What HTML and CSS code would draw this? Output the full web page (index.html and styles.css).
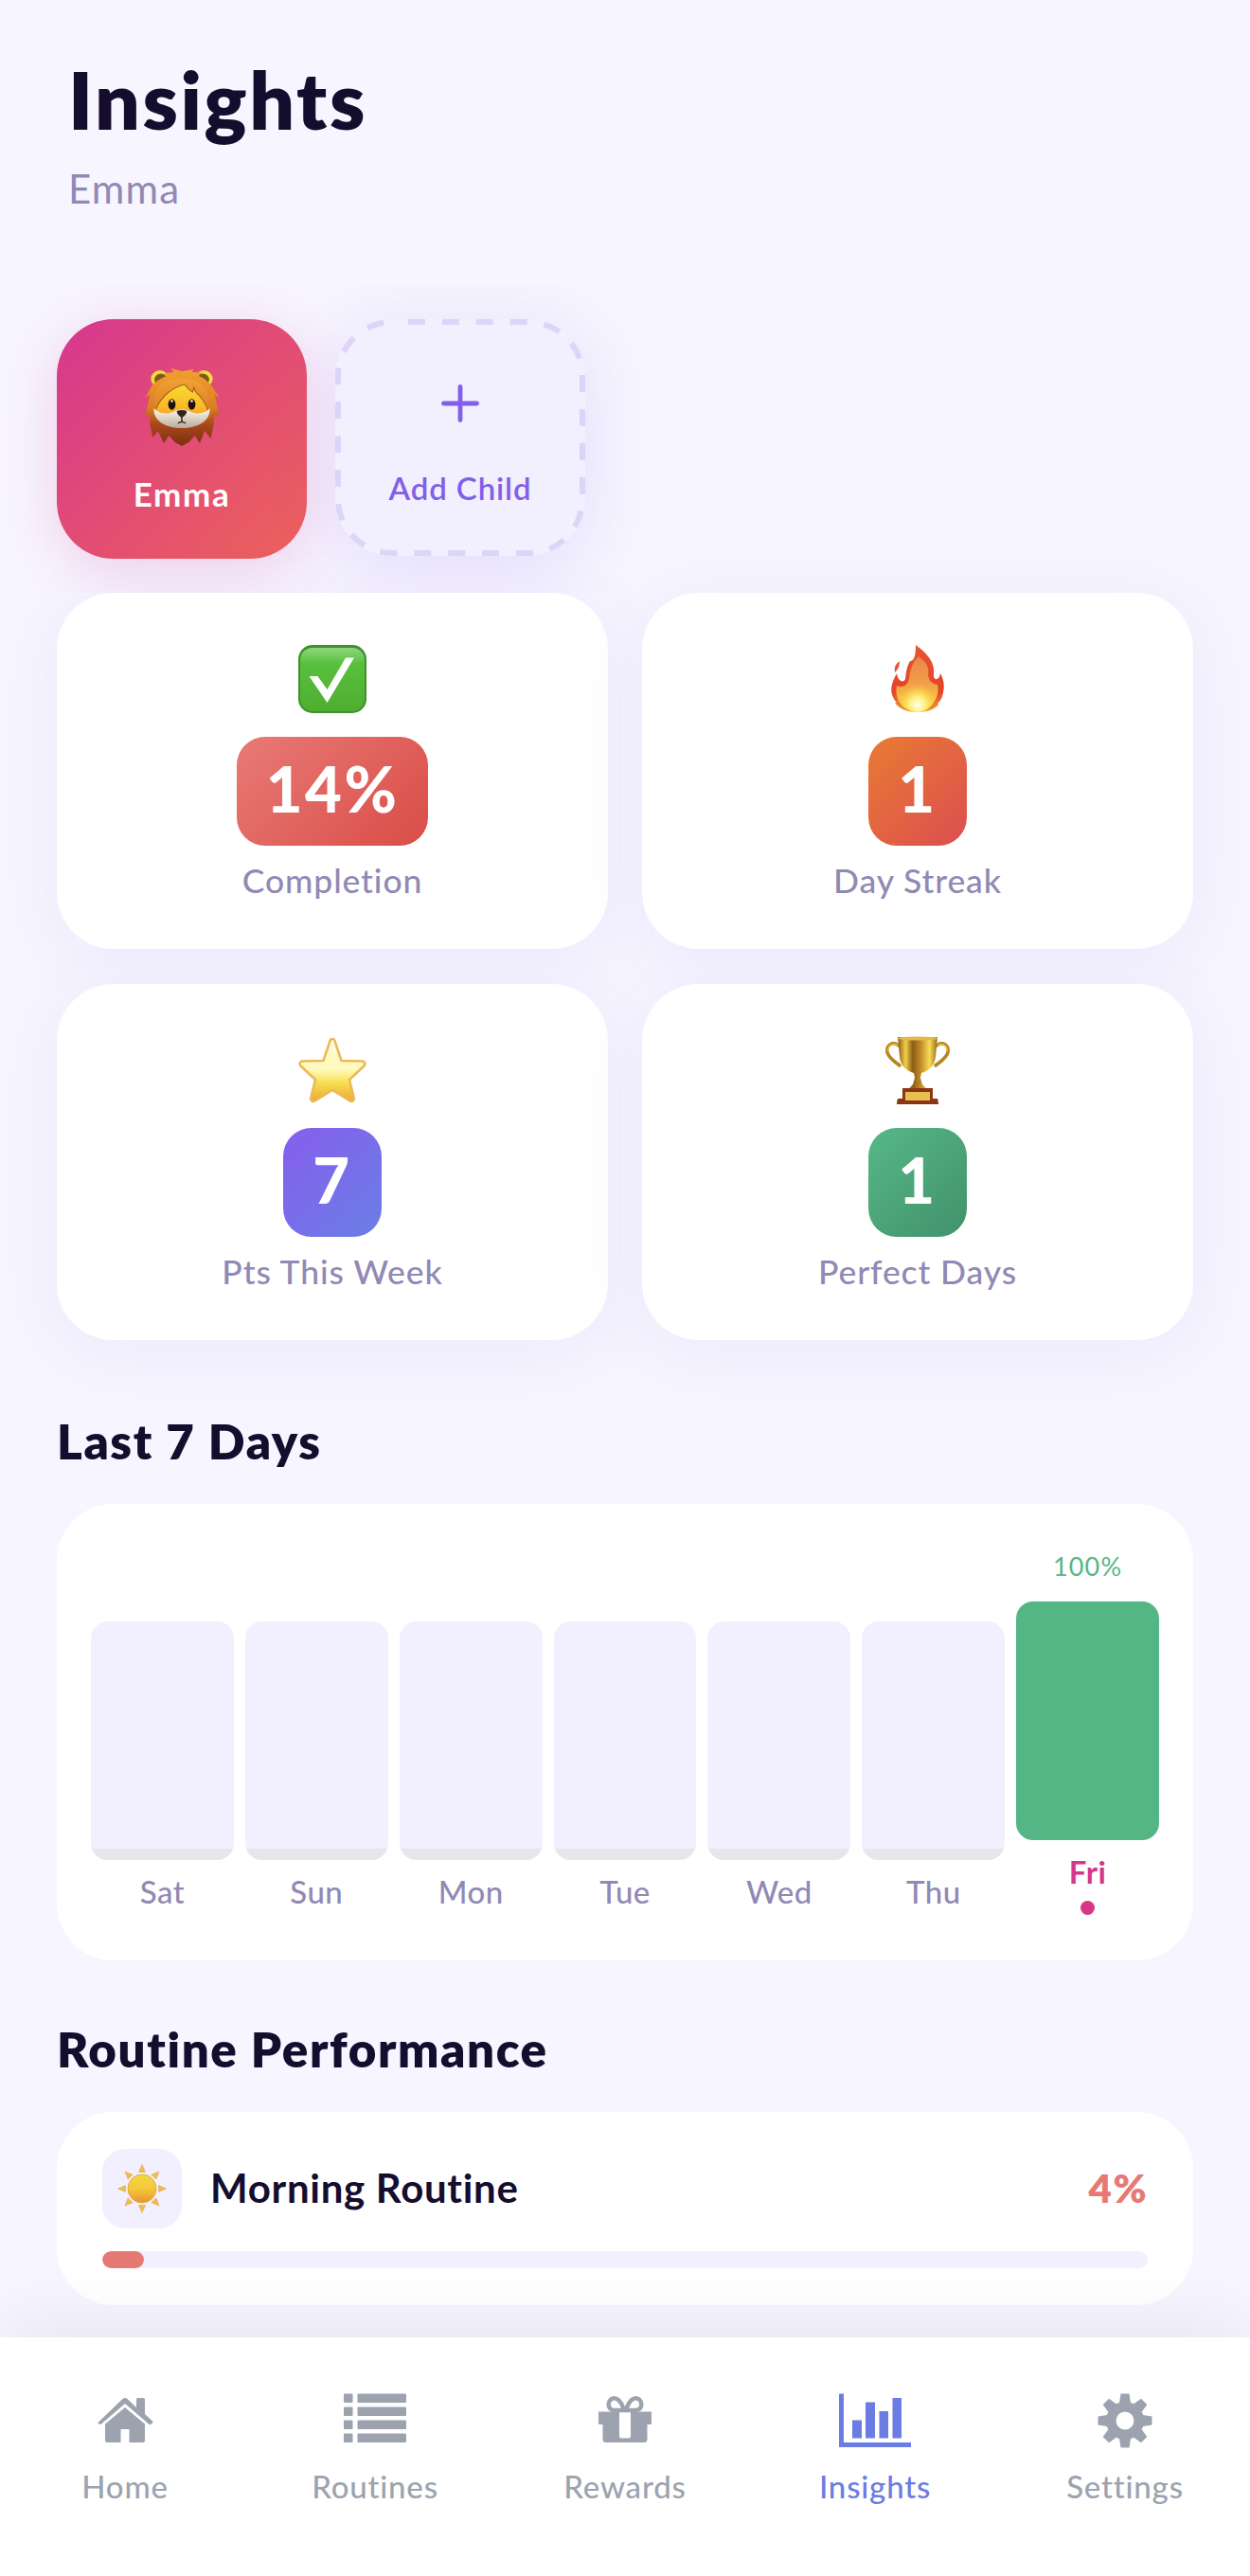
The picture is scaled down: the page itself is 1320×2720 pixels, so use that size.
FILE: index.html
```html
<!DOCTYPE html>
<html lang="en">
<head>
  <meta charset="UTF-8" />
  <meta name="viewport" content="width=device-width, initial-scale=1.0"/>
  <title>Insights</title>
  <link rel="stylesheet" href="styles.css">
</head>
<body>

<header>
  <h1>Insights</h1>
  <p>Emma</p>
</header>

<section class="children">
  <div class="child active">
    <svg width="80" height="82" viewBox="0 0 76 82" preserveAspectRatio="none">
      <defs>
        <linearGradient id="mane" x1="0" y1="0" x2="0" y2="1">
          <stop offset="0" stop-color="#f0a030"/>
          <stop offset="0.5" stop-color="#dc7f24"/>
          <stop offset="0.72" stop-color="#a8481a"/>
          <stop offset="1" stop-color="#7c2f12"/>
        </linearGradient>
        <linearGradient id="hair" x1="0" y1="0" x2="0" y2="1">
          <stop offset="0" stop-color="#f0a234"/>
          <stop offset="1" stop-color="#dd8124"/>
        </linearGradient>
        <linearGradient id="face" x1="0" y1="0" x2="0" y2="1">
          <stop offset="0" stop-color="#f6dc30"/>
          <stop offset="0.5" stop-color="#fbbc28"/>
          <stop offset="1" stop-color="#f08a2c"/>
        </linearGradient>
        <linearGradient id="muzzle" x1="0" y1="0" x2="0" y2="1">
          <stop offset="0" stop-color="#fffaf0"/>
          <stop offset="1" stop-color="#b9ab9c"/>
        </linearGradient>
      </defs>
      <circle cx="16" cy="11" r="9" fill="#f2dc3c"/>
      <circle cx="60" cy="11" r="9" fill="#f2dc3c"/>
      <circle cx="17" cy="12" r="6.5" fill="#7d5a1c"/>
      <circle cx="59" cy="12" r="6.5" fill="#7d5a1c"/>
      <path fill="url(#mane)" d="M38 3 L27 0 L30 4 L20 5 L23 8 C13 12 8 17 6 22 L1 31 L6 28 L1 52 L6 49 L6 59 L9 73 L14 66 L20 79 L25 71 L31 78 L38 82 L45 78 L51 71 L56 79 L61 66 L67 74 L70 59 L71 49 L76 52 L71 28 L76 31 L70 22 C67 16 62 11 55 8 L58 4 L48 4 L50 1 Z"/>
      <path fill="url(#face)" d="M38 16 C52 17 63 27 63 42 C63 55 52 62 38 62 C24 62 12 55 12 42 C12 27 24 17 38 16 Z"/>
      <path fill="url(#hair)" d="M41 17 C36 18 30 21 25 25 C19 30 15 35 12 43 C9 35 10 24 18 16 C26 9 50 9 57 16 C66 24 66 35 64 44 C62 36 59 33 55 28 C52 26 51 23 50 20 L49 25 C45 23 43 20 41 17 Z"/>
      <path d="M41 17 C36 18 30 21 25 25 C19 30 15 35 12 43 M64 44 C62 36 59 33 55 28 C52 26 51 23 50 20 L49 25 C45 23 43 20 41 17" fill="none" stroke="#a9621a" stroke-width="1"/>
      <path fill="url(#muzzle)" d="M10 42 C14 48 25 49 31 45 C35 43 41 43 45 45 C51 49 62 48 66 42 C67 55 55 63 38 63 C21 63 9 55 10 42 Z"/>
      <ellipse cx="28" cy="38" rx="3.7" ry="5.8" fill="#211008"/>
      <ellipse cx="48" cy="38" rx="3.7" ry="5.8" fill="#211008"/>
      <circle cx="28" cy="34.5" r="1.2" fill="#fff"/>
      <circle cx="48" cy="34.5" r="1.2" fill="#fff"/>
      <path fill="#33241e" d="M33 45 Q38 43 43 45 Q43 49 38 52 Q33 49 33 45 Z"/>
      <path d="M38 51 V56 M34 58 Q38 55 42 58" stroke="#33241e" stroke-width="1.4" fill="none"/>
    </svg>
    <span class="child-name">Emma</span>
  </div>
  <div class="child add">
    <!-- dashed outline -->
    <svg class="outline" width="264" height="250" viewBox="0 0 264 250">
      <rect x="3" y="3" width="258" height="244" rx="57" fill="none" stroke="#dcd5f8" stroke-width="6" stroke-dasharray="18 17.9" stroke-dashoffset="-17"/>
    </svg>
    <svg width="40" height="40" viewBox="0 0 40 40">
      <path d="M20 2.500V37.500M2.500 20H37.500" stroke="#825fe8" stroke-width="4.800" stroke-linecap="round"/>
    </svg>
    <span class="child-name">Add Child</span>
  </div>
</section>

<section class="stats">
  <div class="card stat">
    <svg width="72" height="72" viewBox="0 0 72 72">
      <defs>
        <linearGradient id="check" x1="0" y1="0" x2="0" y2="1">
          <stop offset="0" stop-color="#8ed67e"/>
          <stop offset="0.25" stop-color="#58c03c"/>
          <stop offset="1" stop-color="#4fae31"/>
        </linearGradient>
      </defs>
      <rect width="72" height="72" rx="15" fill="#3f8f2d"/>
      <rect x="2" y="3" width="68" height="67" rx="13" fill="url(#check)"/>
      <path fill="#fff" d="M11.500 33 H20.500 L30.500 47 L50 13.500 H59 L30.500 61 Z"/>
    </svg>
    <div class="value completion">14%</div>
    <div class="label">Completion</div>
  </div>
  <div class="card stat">
    <svg width="72" height="72" viewBox="0 0 72 72">
      <defs>
        <linearGradient id="fireOut" x1="0" y1="0" x2="0" y2="1">
          <stop offset="0" stop-color="#e4572f"/>
          <stop offset="0.7" stop-color="#e5432a"/>
          <stop offset="1" stop-color="#f0a030"/>
        </linearGradient>
        <linearGradient id="fireMid" x1="0" y1="0" x2="0" y2="1">
          <stop offset="0" stop-color="#e9854a"/>
          <stop offset="0.5" stop-color="#f2a04a"/>
          <stop offset="1" stop-color="#fbe23a"/>
        </linearGradient>
        <radialGradient id="fireIn" cx="0.5" cy="0.8" r="0.6">
          <stop offset="0" stop-color="#fffef0"/>
          <stop offset="0.4" stop-color="#fdf07a"/>
          <stop offset="1" stop-color="#f8c23c" stop-opacity="0"/>
        </radialGradient>
      </defs>
      <path fill="url(#fireOut)" d="M34 0 C42 6 55 16 53 31 C52 38 59 38 60 30 C63 35 65 43 63 50 C62 56 60 59 57 62 L58 63 C53 69 44 71 36 71 C26 71 17 68 12 61 L14 61 C9 56 7 48 9 42 C10 37 12 34 14 30 C15 38 21 41 23 36 C24 29 24 24 28 17 C32 17 34 12 34 0 Z"/>
      <path fill="#e5533a" d="M17 17 C17 23 15 26 12 29 C11 23 13 20 17 17 Z"/>
      <path fill="url(#fireMid)" d="M37 12 C43 17 49 22 47 31 C48 40 53 41 57 42 C60 54 51 70 36 71 C20 70 11 57 14 43 C19 45 25 44 27 36 C28 28 29 20 37 12 Z"/>
      <ellipse cx="36" cy="52" rx="18" ry="19" fill="url(#fireIn)"/>
    </svg>
    <div class="value streak">1</div>
    <div class="label">Day Streak</div>
  </div>
  <div class="card stat">
    <svg width="72" height="72" viewBox="0 0 72 72">
      <defs>
        <linearGradient id="star" x1="0" y1="0" x2="0" y2="1">
          <stop offset="0" stop-color="#fffbe0"/>
          <stop offset="0.5" stop-color="#fff9b8"/>
          <stop offset="0.7" stop-color="#f7df52"/>
          <stop offset="1" stop-color="#eca832"/>
        </linearGradient>
      </defs>
      <path fill="url(#star)" stroke="#ebb956" stroke-width="2.500" stroke-linejoin="round" d="M36 3 Q38 3 38.500 5 L45.500 26 L68 26.500 Q72 28 69.500 31.500 L54 46 L59 66 Q58.500 70 54.500 68.500 L36 57 L17.500 68.500 Q13.500 70 13 66 L18 46 L2.500 31.500 Q0 28 4 26.500 L26.500 26 L33.500 5 Q34 3 36 3 Z"/>
    </svg>
    <div class="value points">7</div>
    <div class="label">Pts This Week</div>
  </div>
  <div class="card stat">
    <svg width="72" height="72" viewBox="0 0 72 72">
      <defs>
        <linearGradient id="cup" x1="0" y1="0" x2="1" y2="0">
          <stop offset="0" stop-color="#8a5a10"/>
          <stop offset="0.2" stop-color="#f2cf4a"/>
          <stop offset="0.38" stop-color="#8c5b14"/>
          <stop offset="0.6" stop-color="#c8922c"/>
          <stop offset="0.8" stop-color="#f7dc58"/>
          <stop offset="1" stop-color="#9a6a14"/>
        </linearGradient>
      </defs>
      <path d="M16 10 C9 5 3 10 4 17 C5 23 12 27 17 31 M56 10 C63 5 69 10 68 17 C67 23 60 27 55 31" fill="none" stroke="#b88420" stroke-width="3.600" stroke-linecap="round"/>
      <path d="M15 10 C9 7 4 11 5 16 M57 10 C63 7 68 11 67 16" fill="none" stroke="#f3d458" stroke-width="1.200"/>
      <path fill="url(#cup)" d="M15 1 H57 L55 22 C54 31 48 37 40 39 L39 44 L41 51 L46 56 H26 L31 51 L33 44 L32 39 C24 37 18 31 17 22 Z"/>
      <ellipse cx="36" cy="2.500" rx="21" ry="2" fill="#e3b94a"/>
      <path fill="#8c3413" d="M20 55 H52 V66 H57 Q58 69 58 72 H14 Q14 69 15 66 H20 Z"/>
      <rect x="23" y="59" width="26" height="9" fill="#e8c050"/>
    </svg>
    <div class="value perfect">1</div>
    <div class="label">Perfect Days</div>
  </div>
</section>

<h2>Last 7 Days</h2>
<section class="card chart">
  <div class="day">
    <div class="bar"><div class="fill"></div></div>
    <span>Sat</span>
  </div>
  <div class="day">
    <div class="bar"><div class="fill"></div></div>
    <span>Sun</span>
  </div>
  <div class="day">
    <div class="bar"><div class="fill"></div></div>
    <span>Mon</span>
  </div>
  <div class="day">
    <div class="bar"><div class="fill"></div></div>
    <span>Tue</span>
  </div>
  <div class="day">
    <div class="bar"><div class="fill"></div></div>
    <span>Wed</span>
  </div>
  <div class="day">
    <div class="bar"><div class="fill"></div></div>
    <span>Thu</span>
  </div>
  <div class="day today">
    <div class="percent">100%</div>
    <div class="bar"><div class="fill" style="height: 100%"></div></div>
    <span>Fri</span>
    <div class="dot"></div>
  </div>
</section>

<h2>Routine Performance</h2>
<section class="card routine">
  <div class="routine-row">
    <div class="routine-icon">
      <svg width="52" height="52" viewBox="0 0 52 52">
        <defs>
          <linearGradient id="sun" x1="0" y1="0" x2="0" y2="1">
            <stop offset="0" stop-color="#f3d740"/>
            <stop offset="0.5" stop-color="#f5c83c"/>
            <stop offset="1" stop-color="#e8952e"/>
          </linearGradient>
        </defs>
        <circle cx="26" cy="26" r="15" fill="url(#sun)" stroke="#dda03c" stroke-width="0.800"/>
        <g fill="#efbc48" stroke="#dca546" stroke-width="0.500">
          <path id="ray" d="M26 0.500 L29.500 8.500 H22.500 Z"/>
          <use href="#ray" transform="rotate(45 26 26)"/>
          <use href="#ray" transform="rotate(90 26 26)"/>
          <use href="#ray" transform="rotate(135 26 26)"/>
          <use href="#ray" transform="rotate(180 26 26)"/>
          <use href="#ray" transform="rotate(225 26 26)"/>
          <use href="#ray" transform="rotate(270 26 26)"/>
          <use href="#ray" transform="rotate(315 26 26)"/>
        </g>
      </svg>
    </div>
    <h3>Morning Routine</h3>
    <strong>4%</strong>
  </div>
  <div class="progress"><div class="progress-fill" style="width: 4%"></div></div>
</section>

<nav>
  <a>
    <svg width="60" height="58" viewBox="0 0 60 58">
      <path d="M2 30.500 L27.500 6 Q30 4 32.500 6 L42 15 V6.500 Q42 5 43.500 5 H49.500 Q51 5 51 6.500 V22 L59 29.500 Q60 30.500 59 31.500 L57 33 Q56 33.500 55 32.500 L30 11 L5 32.500 Q4 33.500 3 32.500 L1 31 Z"/>
      <path d="M30 15 L51 32.500 V49.500 Q51 52 48.500 52 H34.500 V38 H25.500 V52 H11.500 Q9 52 9 49.500 V32.500 Z"/>
    </svg>
    <span>Home</span>
  </a>
  <a>
    <svg width="66" height="58" viewBox="0 0 66 58">
      <rect x="0" y="0.500" width="9.500" height="9.500" rx="1"/><rect x="14.500" y="0.500" width="51.500" height="9.500" rx="1"/>
      <rect x="0" y="14.500" width="9.500" height="9.500" rx="1"/><rect x="14.500" y="14.500" width="51.500" height="9.500" rx="1"/>
      <rect x="0" y="28.500" width="9.500" height="9.500" rx="1"/><rect x="14.500" y="28.500" width="51.500" height="9.500" rx="1"/>
      <rect x="0" y="42.500" width="9.500" height="9.500" rx="1"/><rect x="14.500" y="42.500" width="51.500" height="9.500" rx="1"/>
    </svg>
    <span>Routines</span>
  </a>
  <a>
    <svg width="58" height="58" viewBox="0 0 58 58">
      <path d="M1 19.500 H23 V45 Q23 47.500 25 47.500 H33 Q35 47.500 35 45 V19.500 H57 V32 Q57 33 56 33 H52.500 V48.500 Q52.500 52 49 52 H9 Q5.500 52 5.500 48.500 V33 H2 Q1 33 1 32 Z"/>
      <path class="bow" d="M28 18 C25 8 20 4 16 5.500 C10 7.500 10 18 18 18 Z M30 18 C33 8 38 4 42 5.500 C48 7.500 48 18 40 18 Z"/>
    </svg>
    <span>Rewards</span>
  </a>
  <a class="current">
    <svg width="76" height="58" viewBox="0 0 76 58">
      <path d="M0 0.500 H5 V52 H76 V57 H0 Z"/>
      <path d="M14 28.500 H24 V47.500 H14 Z M28 9.500 H38 V47.500 H28 Z M42.500 19 H52 V47.500 H42.500 Z M56.500 5 H66 V47.500 H56.500 Z"/>
    </svg>
    <span>Insights</span>
  </a>
  <a>
    <svg width="58" height="58" viewBox="0 0 58 58">
      <path class="gear" d="M29 9 A20 20 0 1 0 29 49 A20 20 0 1 0 29 9 Z M29 19.500 A9.500 9.500 0 1 1 29 38.500 A9.500 9.500 0 1 1 29 19.500 Z"/>
      <path id="tooth" d="M24.500 0.500 H33.500 L35 10 H23 Z"/>
      <use href="#tooth" transform="rotate(45 29 29)"/>
      <use href="#tooth" transform="rotate(90 29 29)"/>
      <use href="#tooth" transform="rotate(135 29 29)"/>
      <use href="#tooth" transform="rotate(180 29 29)"/>
      <use href="#tooth" transform="rotate(225 29 29)"/>
      <use href="#tooth" transform="rotate(270 29 29)"/>
      <use href="#tooth" transform="rotate(315 29 29)"/>
    </svg>
    <span>Settings</span>
  </a>
</nav>

</body>
</html>
```
FILE: styles.css
```css
* {
  box-sizing: border-box;
}

body {
  font-family: Lato, "Open Sans", sans-serif;
  background-color: #f7f5ff;
  color: #150d2e;
  margin: 0;
  padding: 0;
}

svg {
  display: block;
  flex-shrink: 0;
}

h1, h2, h3, p {
  margin: 0;
}

header {
  height: 300px;
  padding: 55px 72px 0;
}

h1 {
  font-size: 84px;
  font-weight: 800;
  line-height: 99px;
  letter-spacing: 2.6px;
}

header p {
  margin-top: 20px;
  font-size: 42px;
  line-height: 50px;
  letter-spacing: 1.2px;
  color: #9189b5;
}

.children {
  display: flex;
  align-items: flex-start;
  gap: 30px;
  height: 326px;
  padding: 37px 60px 0;
  overflow: hidden;
}

.child {
  display: flex;
  flex-direction: column;
  align-items: center;
  width: 264px;
  border-radius: 60px;
}

.child.active {
  height: 253px;
  padding-top: 52px;
  background: linear-gradient(135deg, #d6378f, #ed625a);
  color: white;
  box-shadow: 0 12px 60px rgba(214, 55, 143, 0.2);
}

.child.add {
  position: relative;
  height: 250px;
  padding-top: 69px;
  background: #f2efff;
  color: #825fe8;
  box-shadow: 0 12px 72px rgba(130, 95, 232, 0.16);
}

.outline {
  position: absolute;
  top: 0;
  left: 0;
}

.child-name {
  margin-top: 28px;
  font-size: 35px;
  font-weight: 700;
  line-height: 45px;
  letter-spacing: 1.6px;
}

.child.add .child-name {
  margin-top: 49px;
  font-size: 33px;
  font-weight: 600;
  line-height: 41px;
  letter-spacing: 0.9px;
}

.stats {
  display: grid;
  grid-template-columns: 1fr 1fr;
  gap: 37px 36px;
  padding: 0 60px;
}

.card {
  background: white;
  border-radius: 60px;
}

.stat {
  display: flex;
  flex-direction: column;
  align-items: center;
  height: 376px;
  padding-top: 55px;
  box-shadow: 0 12px 72px rgba(130, 95, 232, 0.08);
}

.value {
  min-width: 100px;
  height: 115px;
  margin-top: 25px;
  padding: 0 31px;
  border-radius: 30px;
  color: white;
  font-size: 67px;
  font-weight: 900;
  line-height: 109px;
  letter-spacing: 2.5px;
  text-align: center;
}

.completion {
  background: linear-gradient(135deg, #e87a76, #da4d47);
}

.streak {
  background: linear-gradient(135deg, #e97b33, #dc4e50);
}

.points {
  background: linear-gradient(135deg, #865eed, #6a7ee5);
}

.perfect {
  background: linear-gradient(135deg, #57b888, #41916a);
}

.label {
  margin-top: 14px;
  font-size: 35.5px;
  font-weight: 500;
  line-height: 45px;
  letter-spacing: 0.9px;
  color: #9189b5;
}

h2 {
  margin: 76px 60px 36px;
  font-size: 51px;
  font-weight: 800;
  line-height: 61px;
  letter-spacing: 1.6px;
}

.chart {
  display: flex;
  align-items: flex-end;
  gap: 12px;
  height: 482px;
  margin: 0 60px 63px;
  padding: 0 36px 48px;
}

.day {
  flex: 1;
  display: flex;
  flex-direction: column;
  align-items: center;
}

.bar {
  display: flex;
  align-items: flex-end;
  width: 100%;
  height: 252px;
  border-radius: 18px;
  background: #f2efff;
  overflow: hidden;
}

.fill {
  width: 100%;
  height: 12px;
  background: #e5e7eb;
}

.day span {
  margin-top: 8px;
  font-size: 33px;
  font-weight: 500;
  line-height: 50px;
  letter-spacing: 0.5px;
  color: #9189b5;
}

.percent {
  margin-bottom: 19px;
  font-size: 27px;
  line-height: 36px;
  letter-spacing: 1.2px;
  color: #55b685;
}

.today .fill {
  background: #55b685;
}

.today span {
  color: #d63889;
  font-weight: 700;
}

.dot {
  width: 15px;
  height: 15px;
  margin-top: 6px;
  border-radius: 50%;
  background: #d63889;
}

.chart + h2 {
  margin-top: 0;
}

.routine {
  height: 204px;
  margin: 0 60px 34px;
  padding: 39px 48px 0;
}

.routine-row {
  display: flex;
  align-items: center;
}

.routine-icon {
  display: flex;
  align-items: center;
  justify-content: center;
  width: 84px;
  height: 84px;
  margin-right: 30px;
  border-radius: 24px;
  background: #f2efff;
}

h3 {
  flex: 1;
  font-size: 42px;
  font-weight: 700;
  letter-spacing: 0.7px;
  line-height: 52px;
  padding-bottom: 2px;
}

.routine strong {
  font-size: 42px;
  font-weight: 800;
  line-height: 52px;
  letter-spacing: 1.5px;
  padding-bottom: 2px;
  color: #e67974;
}

.progress {
  height: 18px;
  margin-top: 24px;
  border-radius: 9px;
  background: #f2efff;
  overflow: hidden;
}

.progress-fill {
  height: 100%;
  border-radius: 9px;
  background: #e67974;
}

nav {
  position: relative;
  display: flex;
  height: 252px;
  padding-top: 59px;
  background: white;
  box-shadow: 0 -12px 72px rgba(0, 0, 0, 0.07);
}

nav a {
  flex: 1;
  display: flex;
  flex-direction: column;
  align-items: center;
  color: #9ca3af;
  fill: currentColor;
}

nav span {
  margin-top: 20px;
  font-size: 33px;
  font-weight: 500;
  line-height: 40px;
  letter-spacing: 0.8px;
}

nav .current {
  color: #6b7ce2;
}

.bow {
  fill: none;
  stroke: currentColor;
  stroke-width: 4.5;
}

.gear {
  fill-rule: evenodd;
}
```
